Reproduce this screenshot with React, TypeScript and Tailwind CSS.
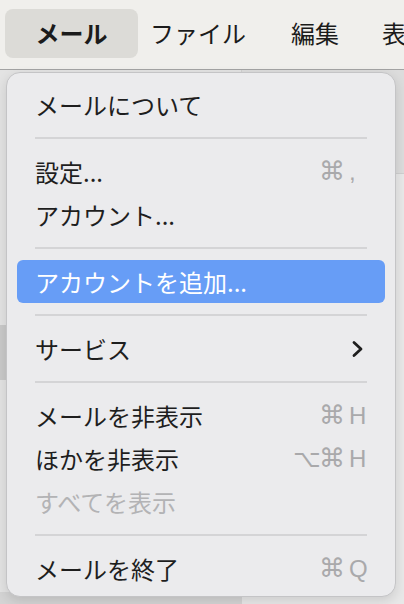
const font = '[font-family:"Noto_Sans_CJK_JP","Noto_Sans",sans-serif]'

type Item = {
  label: string
  keys?: string[]
  mod?: string
  submenu?: boolean
  active?: boolean
  disabled?: boolean
}

const groups: Item[][] = [
  [{ label: 'メールについて' }],
  [
    { label: '設定...', keys: ['⌘', ','] },
    { label: 'アカウント...' }
  ],
  [{ label: 'アカウントを追加...', active: true }],
  [{ label: 'サービス', submenu: true }],
  [
    { label: 'メールを非表示', keys: ['⌘', 'H'] },
    { label: 'ほかを非表示', keys: ['⌘', 'H'], mod: '⌥' },
    { label: 'すべてを表示', disabled: true }
  ],
  [{ label: 'メールを終了', keys: ['⌘', 'Q'] }]
]

function Shortcut({ keys, mod }: { keys: string[], mod?: string }) {
  return (
    <div className="flex items-center text-[#a9a9ab]">
      {mod && <span className="w-[26px] text-left text-[24px] [font-family:'DejaVu_Sans',sans-serif]">{mod}</span>}
      <span className="w-[26px] text-left text-[26px] [font-family:'DejaVu_Sans',sans-serif]">{keys[0]}</span>
      <span className="w-[24px] pl-[4px] text-left text-[24px] [font-family:'Liberation_Sans',sans-serif]">{keys[1]}</span>
    </div>
  )
}

function Row({ item }: { item: Item }) {
  const color = item.active ? 'bg-[#679df6] text-white' : item.disabled ? 'text-[#b3b3b5]' : 'text-[#1e1e1e]'
  return (
    <div className={`h-[43px] mx-[10px] pl-[18px] pr-[16px] rounded-[6px] flex items-center justify-between ${color}`}>
      <span className="text-[24px] leading-none">{item.label}</span>
      {item.keys && <Shortcut keys={item.keys} mod={item.mod} />}
      {item.submenu && (
        <svg width="14" height="18" viewBox="0 0 14 18" className="mr-[4px]">
          <path d="M3 2.5 L10 9 L3 15.5" fill="none" stroke="#1e1e1e" strokeWidth="2.8" strokeLinecap="round" strokeLinejoin="round" />
        </svg>
      )}
    </div>
  )
}

export default function App() {
  return (
    <div className={`w-[404px] h-[604px] relative overflow-hidden flex flex-col bg-[#e6e6e6] ${font}`}>
      <div className="h-[70px] shrink-0 bg-[#f0efec] border-b border-[#a3a3a3] flex items-center px-[5px] text-[24px] text-[#1b1b1b] whitespace-nowrap">
        <div className="h-[49px] w-[133px] shrink-0 -mt-[3px] rounded-[8px] bg-[#dcdbd7] flex items-center justify-center font-bold">メール</div>
        <div className="ml-[12px] -mt-[3px] shrink-0">ファイル</div>
        <div className="ml-[45px] -mt-[3px] shrink-0">編集</div>
        <div className="ml-[43px] -mt-[3px] shrink-0">表示</div>
      </div>
      <div className="flex-1 flex">
        <div className="w-[242px] shrink-0 flex flex-col bg-[#e3e3e3]">
          <div className="h-[255px] border-r border-[#d0d0d0]"></div>
          <div className="h-[55px] bg-[#c9c9c9]"></div>
          <div className="flex-1"></div>
          <div className="h-[12px] bg-[#d4d4d4]"></div>
        </div>
        <div className="flex-1 flex flex-col">
          <div className="h-[104px] bg-[#dcdcdc] border-b border-[#cfcfcf]"></div>
          <div className="flex-1 bg-[#e8e8e8]"></div>
        </div>
      </div>

      <div className="absolute left-[6px] top-[72px] w-[390px] h-[525px] rounded-[14px] bg-[#ebebed] border border-[#c4c4c6] shadow-[0_4px_12px_rgba(0,0,0,0.12)] pt-[10px] flex flex-col">
        {groups.map((g, gi) => (
          <div key={gi}>
            {gi > 0 && (
              <div className="h-[24px] flex items-center px-[28px]">
                <div className="h-[2px] w-full bg-[#d4d4d6]"></div>
              </div>
            )}
            {g.map(item => <Row key={item.label} item={item} />)}
          </div>
        ))}
      </div>
    </div>
  )
}
